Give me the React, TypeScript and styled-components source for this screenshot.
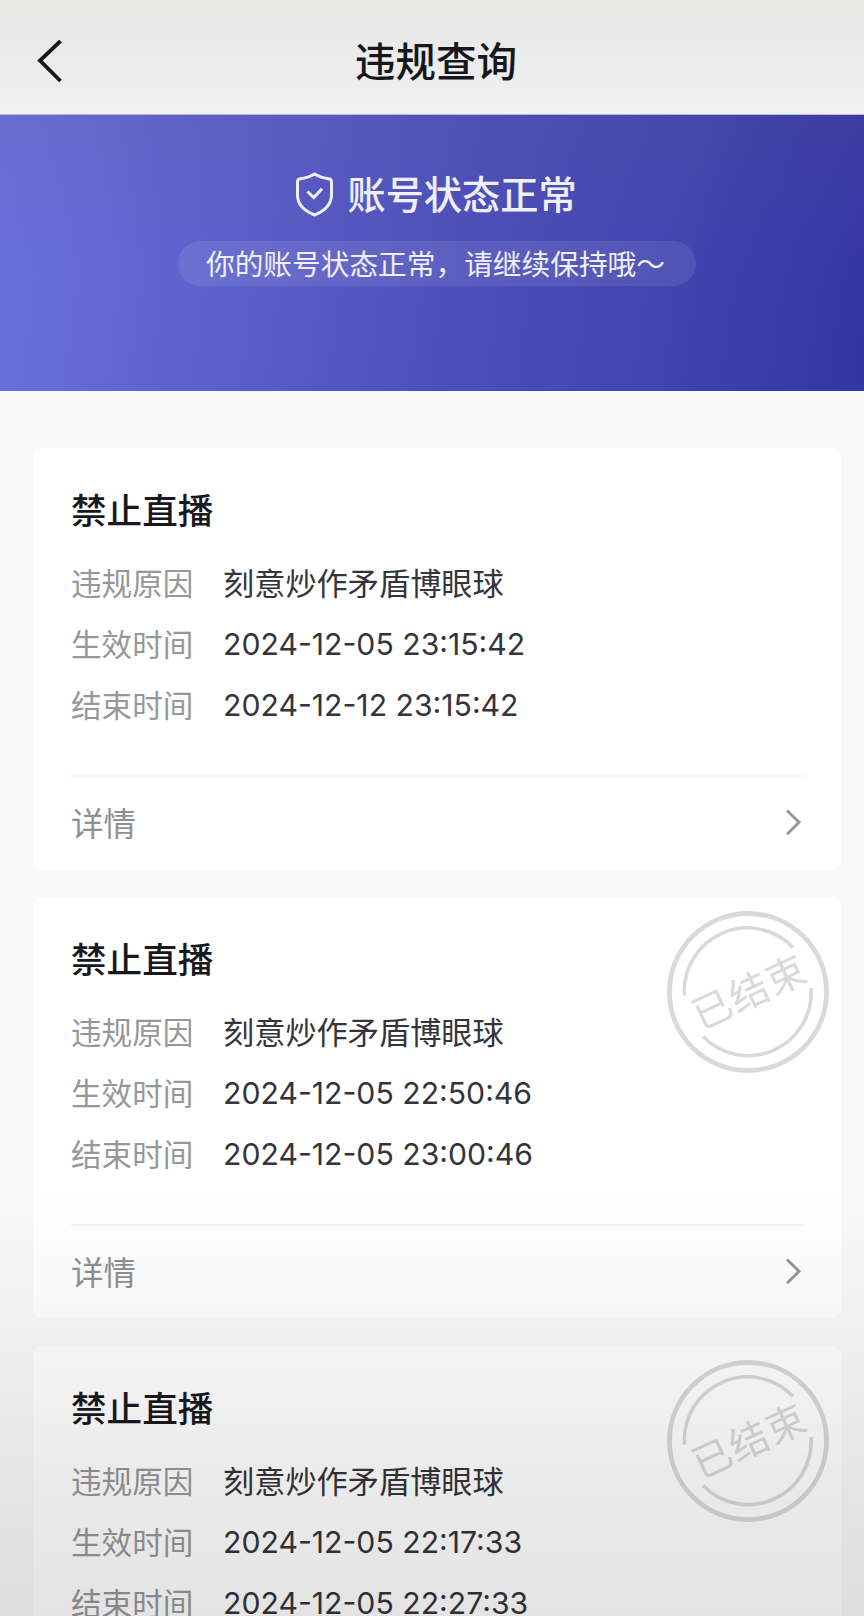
import React from "react";
import styled, { createGlobalStyle } from "styled-components";

const GlobalStyle = createGlobalStyle`
  * { box-sizing: border-box; }
  body { margin: 0; }
`;

const Page = styled.div`
  position: relative;
  width: 864px;
  height: 1616px;
  overflow: hidden;
  display: flex;
  flex-direction: column;
  background: #f9f9f9;
  color: #17171d;
  font-family: Inter, "Noto Sans CJK SC", sans-serif;
`;

const Header = styled.header`
  flex: none;
  height: 115px;
  padding: 10px 36px 0;
  display: grid;
  grid-template-columns: 28px 1fr 20px;
  align-items: center;
  border-bottom: 1px solid #b9b8d0;
  background: linear-gradient(#e8e8e6 0%, #ebeaea 35%, #f1f1f1 100%);
`;

const HeaderTitle = styled.h1`
  margin: 2px 0 0;
  text-align: center;
  font-size: 40.5px;
  line-height: 54px;
  font-weight: 500;
`;

const Banner = styled.section`
  flex: none;
  height: 276px;
  padding-top: 52px;
  display: flex;
  flex-direction: column;
  align-items: center;
  color: #efefff;
  background:
    linear-gradient(rgba(90, 85, 150, 0.16), rgba(90, 85, 150, 0) 60%),
    linear-gradient(98deg, #6a72dc 0%, #5c62cc 25%, #4d50ba 52%, #4044ae 78%, #3434a2 100%);
`;

const Status = styled.div`
  display: flex;
  align-items: center;
  gap: 13px;
  height: 56px;
  margin-left: 8px;
  font-size: 38.2px;
  line-height: 56px;
  font-weight: 500;
`;

const StatusNote = styled.div`
  width: 518px;
  height: 45px;
  margin: 18px 0 0 10px;
  padding: 1px 3px 0 0;
  border-radius: 23px;
  background: rgba(255, 255, 255, 0.09);
  text-align: center;
  font-size: 28.7px;
  line-height: 45px;
  white-space: nowrap;
`;

const CardList = styled.main`
  padding: 57px 23px 0 33px;
  display: flex;
  flex-direction: column;
  gap: 28px;
`;

const Card = styled.article`
  position: relative;
  flex: none;
  height: 421px;
  padding: 38px 38px 0;
  border-radius: 8px;
  background: #fff;
`;

const CardTitle = styled.h2`
  margin: 0 0 13px;
  font-size: 35.6px;
  line-height: 52px;
  font-weight: 500;
`;

const Field = styled.div`
  display: flex;
  align-items: center;
  height: 61px;
  white-space: nowrap;
`;

const Label = styled.span`
  width: 152px;
  font-size: 30.6px;
  color: #97979a;
`;

const Value = styled.span<{ $numeric?: boolean }>`
  padding-top: ${(p) => (p.$numeric ? 3 : 0)}px;
  font-size: ${(p) => (p.$numeric ? 30.2 : 31.2)}px;
  color: #34343a;
`;

const DetailRow = styled.div`
  display: flex;
  align-items: center;
  justify-content: space-between;
  height: 93px;
  margin-top: 41px;
  border-top: 2px solid #f5f5f5;
  padding-right: 1px;
  font-size: 32.5px;
  color: #8f8f92;
`;

const DetailLabel = styled.span`
  line-height: 48px;
  padding-top: 5px;
`;

const Stamp = styled.div`
  position: absolute;
  top: 13px;
  right: 11px;
  width: 164px;
  height: 164px;
  display: grid;
  place-items: center;
  color: #d9d9d9;

  & > * { grid-area: 1 / 1; }
`;

const StampText = styled.span`
  transform: rotate(-25deg);
  font-size: 39px;
  letter-spacing: 1.5px;
  margin-left: 4px;
  line-height: 44px;
  white-space: nowrap;
`;

const Shade = styled.div`
  position: absolute;
  inset: 1190px 0 0;
  pointer-events: none;
  background: linear-gradient(
    transparent,
    rgba(0, 0, 0, 0.035) 31%,
    rgba(0, 0, 0, 0.078) 66%,
    rgba(0, 0, 0, 0.108)
  );
`;

const BackIcon = () => (
  <svg width="28" height="44" viewBox="0 0 28 44" fill="none" stroke="#17171d" strokeWidth="3.8">
    <path d="M24.5 1 4 20.5 24.5 41" />
  </svg>
);

const ShieldIcon = () => (
  <svg width="39" height="46" viewBox="0 0 39 46" fill="none" stroke="currentColor" strokeWidth="3" strokeLinejoin="round">
    <path d="M19.5 2C14.500 5 9 6.300 4.500 7Q2.500 7.500 2.500 10V23C2.500 33.500 9.500 39 19.500 43C29.500 39 36.500 33.500 36.500 23V10Q36.500 7.500 34.500 7C30 6.300 24.500 5 19.500 2Z" />
    <path d="m12.500 19.500 6.300 6 8.200-8.800" strokeLinejoin="miter" />
  </svg>
);

const MoreIcon = () => (
  <svg width="17" height="28" viewBox="0 0 17 28" fill="none" stroke="#989899" strokeWidth="3">
    <path d="m2 1.500 12 11.800L2 25.200" />
  </svg>
);

const EndedStamp = () => (
  <Stamp>
    <svg width="164" height="164" viewBox="0 0 164 164" fill="none" stroke="currentColor">
      <circle cx="82" cy="82" r="78.500" strokeWidth="4.800" />
      <path d="M18.500 85.500A63 63 0 0 1 127 37.500" strokeWidth="3.500" />
      <path d="M145 78A63 63 0 0 1 37 126.500" strokeWidth="3.500" />
    </svg>
    <StampText>已结束</StampText>
  </Stamp>
);

type Violation = { start: string; end: string; ended: boolean };

const violations: Violation[] = [
  { start: "2024-12-05 23:15:42", end: "2024-12-12 23:15:42", ended: false },
  { start: "2024-12-05 22:50:46", end: "2024-12-05 23:00:46", ended: true },
  { start: "2024-12-05 22:17:33", end: "2024-12-05 22:27:33", ended: true },
];

const ViolationCard = ({ start, end, ended }: Violation) => (
  <Card>
    <CardTitle>禁止直播</CardTitle>
    <Field>
      <Label>违规原因</Label>
      <Value>刻意炒作矛盾博眼球</Value>
    </Field>
    <Field>
      <Label>生效时间</Label>
      <Value $numeric>{start}</Value>
    </Field>
    <Field>
      <Label>结束时间</Label>
      <Value $numeric>{end}</Value>
    </Field>
    <DetailRow>
      <DetailLabel>详情</DetailLabel>
      <MoreIcon />
    </DetailRow>
    {ended && <EndedStamp />}
  </Card>
);

export default function App() {
  return (
    <Page>
      <GlobalStyle />
      <Header>
        <BackIcon />
        <HeaderTitle>违规查询</HeaderTitle>
      </Header>
      <Banner>
        <Status>
          <ShieldIcon />
          <span>账号状态正常</span>
        </Status>
        <StatusNote>你的账号状态正常，请继续保持哦～</StatusNote>
      </Banner>
      <CardList>
        {violations.map((v) => (
          <ViolationCard key={v.start} {...v} />
        ))}
      </CardList>
      <Shade />
    </Page>
  );
}
